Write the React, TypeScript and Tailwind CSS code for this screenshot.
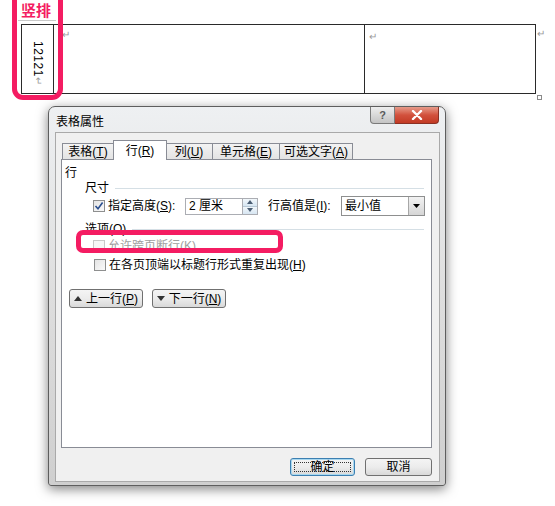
import React from "react";

function Chk({ checked = false, disabled = false }: { checked?: boolean; disabled?: boolean }) {
  return (
    <div
      className={
        "w-[12px] h-[12px] border flex items-center justify-center shrink-0 " +
        (disabled
          ? "border-[#c8c8c8] bg-[#f6f6f6]"
          : "border-[#8e8f8f] bg-gradient-to-br from-[#e4e4e4] to-[#fafafa]")
      }
    >
      {checked && (
        <svg width="10" height="10" viewBox="0 0 10 10">
          <path d="M1.5 5 L4 7.8 L8.6 1.6" stroke="#2a4f8f" strokeWidth="1.6" fill="none" />
        </svg>
      )}
    </div>
  );
}

function Ret({ className = "" }: { className?: string }) {
  return <span className={"text-[10px] leading-none text-[#9a9a9a] " + className}>↵</span>;
}

function Tab({ label, acc, w, active = false }: { label: string; acc: string; w: string; active?: boolean }) {
  return (
    <div
      className={
        "flex items-center justify-center border border-[#898c95] " +
        w +
        " " +
        (active
          ? "h-[20px] bg-white border-b-0 relative z-10 -mx-[1px]"
          : "h-[17px] bg-gradient-to-b from-[#f3f3f3] to-[#e3e3e3] -ml-px first:ml-0")
      }
    >
      <span>
        {label}(<u>{acc}</u>)
      </span>
    </div>
  );
}

function Btn({ children, w, focused = false, h = "h-[18px]" }: { children: React.ReactNode; w: string; focused?: boolean; h?: string }) {
  return (
    <div
      className={
        "rounded-[3px] border flex items-center justify-center bg-gradient-to-b from-[#f4f4f4] via-[#ececec] to-[#d9d9d9] " +
        w +
        " " +
        h +
        " " +
        (focused ? "border-[#3c7fb1] shadow-[inset_0_0_0_1px_#a8d8f0]" : "border-[#707070]")
      }
    >
      {focused ? (
        <div className="border border-dotted border-[#333] w-[calc(100%-6px)] h-[calc(100%-6px)] flex items-center justify-center">
          {children}
        </div>
      ) : (
        children
      )}
    </div>
  );
}

export default function App() {
  const pink = "border-[#f41c62]";
  return (
    <div className="relative w-[555px] h-[506px] bg-white overflow-hidden font-['Liberation_Sans','Noto_Sans_CJK_SC',sans-serif] text-[12px] leading-[14px] text-black">
      {/* document table */}
      <div className="pt-[20px] pl-[17px]">
        <div className="h-[1px] w-[38px] bg-[#c9c9c9] ml-[1px] mb-[3px]" />
        <div className="ml-[4px] flex w-[515px] h-[70px] border-[1.5px] border-[#2a2a2a] relative">
          <div className="w-[32px] shrink-0 border-r-[1.5px] border-[#2a2a2a] flex justify-center pt-[16px]">
            <div className="[writing-mode:vertical-rl] text-[12px] leading-[14px] font-['Liberation_Sans',sans-serif] tracking-[0.5px]">
              12121<span className="text-[10px] text-[#9a9a9a]">↵</span>
            </div>
          </div>
          <div className="w-[311px] shrink-0 border-r-[1.5px] border-[#2a2a2a] pl-[8px] pt-[2px]">
            <Ret />
          </div>
          <div className="flex-1 pl-[4px] pt-[4px]">
            <Ret />
          </div>
          <Ret className="absolute -right-[10px] top-[4px]" />
          <div className="absolute -right-[7px] -bottom-[7px] w-[5px] h-[5px] border border-[#8a8a8a] bg-white" />
        </div>
      </div>

      {/* top-left pink annotation */}
      <div className={"absolute left-[12px] -top-[14px] w-[51px] h-[114px] border-[5px] rounded-[11px] " + pink} />
      <div className="absolute left-[18px] top-[2px] bg-white px-[3px] text-[15px] leading-[16px] font-bold text-[#f41c62] font-['Noto_Sans_CJK_SC',sans-serif]">
        竖排
      </div>

      {/* dialog */}
      <div className="absolute left-[48px] top-[106px] w-[398px] h-[380px] rounded-t-[7px] rounded-b-[3px] border border-[#5e5e5e] bg-gradient-to-b from-[#eef0f2] via-[#dedede] to-[#cfcfcf] shadow-[0_3px_12px_rgba(0,0,0,0.5)] flex flex-col">
        <div className="h-[25px] flex justify-between items-start shrink-0">
          <div className="pl-[7px] pt-[8px] text-[12px] leading-[14px]">表格属性</div>
          <div className="flex mr-[6px]">
            <div className="w-[25px] h-[17px] rounded-bl-[4px] border border-t-0 border-[#7a7a7a] bg-gradient-to-b from-[#eeeeee] to-[#c4c4c4] flex items-center justify-center text-[11px] font-bold text-[#5a5a5a]">
              ?
            </div>
            <div className="w-[44px] h-[17px] rounded-br-[4px] border border-l-0 border-t-0 border-[#8a3024] bg-gradient-to-b from-[#e59a8a] via-[#d2513d] to-[#c23a24] flex items-center justify-center">
              <svg width="12" height="10" viewBox="0 0 12 10">
                <path d="M2 1 L10 9 M10 1 L2 9" stroke="white" strokeWidth="2.4" strokeLinecap="round" />
              </svg>
            </div>
          </div>
        </div>
        <div className="ml-[6px] mr-[5px] h-[350px] border border-[#a9a9a9] bg-[#f0f0f0] flex flex-col pl-[5px] pr-[7px] pt-[7px]">
          {/* tabs */}
          <div className="flex items-end pl-[1px] h-[20px] -mb-px relative z-10">
            <Tab label="表格" acc="T" w="w-[52px]" />
            <Tab label="行" acc="R" w="w-[54px]" active />
            <Tab label="列" acc="U" w="w-[48px]" />
            <Tab label="单元格" acc="E" w="w-[68px]" />
            <Tab label="可选文字" acc="A" w="w-[74px]" />
          </div>
          {/* panel */}
          <div className="h-[289px] border border-[#898c95] bg-white flex flex-col">
            <div className="ml-[3px] mt-[6px]">行</div>
            <div className="flex items-center pl-[23px] pr-[7px] mt-[1px]">
              <span>尺寸</span>
              <div className="flex-1 ml-[6px] h-px bg-[#d5dfe5]" />
            </div>
            <div className="flex items-center h-[20px] mt-[1px] pl-[31px]">
              <Chk checked />
              <span className="ml-[3px] w-[77px]">
                指定高度(<u>S</u>):
              </span>
              <div className="w-[58px] h-[17px] border border-[#abadb3] flex items-center pl-[3px]">2 厘米</div>
              <div className="w-[15px] h-[17px] border border-l-0 border-[#abadb3] flex flex-col">
                <div className="flex-1 bg-gradient-to-b from-[#f2f7fb] to-[#d7e6f2] flex items-center justify-center border-b border-[#b7c8d6]">
                  <svg width="6" height="4" viewBox="0 0 6 4"><path d="M0 4 L3 0 L6 4Z" fill="#4a5d73" /></svg>
                </div>
                <div className="flex-1 bg-gradient-to-b from-[#f2f7fb] to-[#d7e6f2] flex items-center justify-center">
                  <svg width="6" height="4" viewBox="0 0 6 4"><path d="M0 0 L3 4 L6 0Z" fill="#4a5d73" /></svg>
                </div>
              </div>
              <span className="ml-[10px] w-[73px]">
                行高值是(<u>I</u>):
              </span>
              <div className="w-[84px] h-[20px] border border-[#8e8f8f] flex items-center pl-[3px] relative">
                <span className="flex-1">最小值</span>
                <div className="w-[16px] h-[18px] border-l border-[#a7a7a7] bg-gradient-to-b from-[#f2f2f2] to-[#d6d6d6] flex items-center justify-center">
                  <svg width="7" height="4" viewBox="0 0 7 4"><path d="M0 0 L3.5 4 L7 0Z" fill="#000" /></svg>
                </div>
              </div>
            </div>
            <div className="flex items-center pl-[23px] pr-[7px] mt-[6px]">
              <span>
                选项(<u>O</u>)
              </span>
              <div className="flex-1 ml-[6px] h-px bg-[#d5dfe5]" />
            </div>
            <div className="flex items-center pl-[31px] mt-[2px] h-[16px]">
              <Chk disabled />
              <span className="ml-[3px] text-[#a0a0a0]">
                允许跨页断行(<u>K</u>)
              </span>
            </div>
            <div className="flex items-center pl-[32px] mt-[3px] h-[16px]">
              <Chk />
              <span className="ml-[3px]">
                在各页顶端以标题行形式重复出现(<u>H</u>)
              </span>
            </div>
            <div className="flex items-center pl-[7px] mt-[16px] gap-[9px]">
              <Btn w="w-[74px]" h="h-[19px]">
                <svg width="8" height="5" viewBox="0 0 8 5" className="mr-[4px]"><path d="M0 5 L4 0 L8 5Z" fill="#333" /></svg>
                上一行(<u>P</u>)
              </Btn>
              <Btn w="w-[74px]" h="h-[19px]">
                <svg width="8" height="5" viewBox="0 0 8 5" className="mr-[4px]"><path d="M0 0 L4 5 L8 0Z" fill="#333" /></svg>
                下一行(<u>N</u>)
              </Btn>
            </div>
          </div>
          <div className="flex justify-end gap-[10px] mt-[10px]">
            <Btn w="w-[65px]" focused>
              确定
            </Btn>
            <Btn w="w-[67px]">取消</Btn>
          </div>
        </div>
      </div>

      {/* second pink annotation */}
      <div className={"absolute left-[76px] top-[230px] w-[207px] h-[23px] border-[5px] rounded-[7px] " + pink} />
    </div>
  );
}
